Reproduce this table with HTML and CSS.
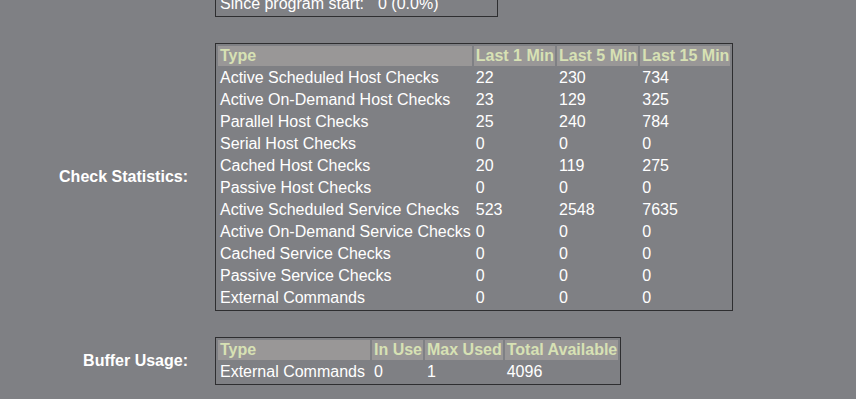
FILE: index.html
```html
<!DOCTYPE html>
<html>
<head>
<meta charset="utf-8">
<title>Performance Information</title>
<link rel="stylesheet" href="styles.css">
</head>
<body>
<div class="page">
  <div class="label"></div>
  <table class="stats">
    <tr><td class="since">Since program start:</td><td class="val">0 (0.0%)</td></tr>
  </table>

  <div class="label">Check Statistics:</div>
  <table class="stats">
    <tr><th>Type</th><th>Last 1 Min</th><th>Last 5 Min</th><th>Last 15 Min</th></tr>
    <tr><td>Active Scheduled Host Checks</td><td>22</td><td>230</td><td>734</td></tr>
    <tr><td>Active On-Demand Host Checks</td><td>23</td><td>129</td><td>325</td></tr>
    <tr><td>Parallel Host Checks</td><td>25</td><td>240</td><td>784</td></tr>
    <tr><td>Serial Host Checks</td><td>0</td><td>0</td><td>0</td></tr>
    <tr><td>Cached Host Checks</td><td>20</td><td>119</td><td>275</td></tr>
    <tr><td>Passive Host Checks</td><td>0</td><td>0</td><td>0</td></tr>
    <tr><td>Active Scheduled Service Checks</td><td>523</td><td>2548</td><td>7635</td></tr>
    <tr><td>Active On-Demand Service Checks</td><td>0</td><td>0</td><td>0</td></tr>
    <tr><td>Cached Service Checks</td><td>0</td><td>0</td><td>0</td></tr>
    <tr><td>Passive Service Checks</td><td>0</td><td>0</td><td>0</td></tr>
    <tr><td>External Commands</td><td>0</td><td>0</td><td>0</td></tr>
  </table>

  <div class="label">Buffer Usage:</div>
  <table class="stats">
    <tr><th class="buftype">Type</th><th>In Use</th><th>Max Used</th><th>Total Available</th></tr>
    <tr><td>External Commands</td><td>0</td><td>1</td><td>4096</td></tr>
  </table>
</div>
</body>
</html>
```
FILE: styles.css
```css
html, body {
  margin: 0;
  padding: 0;
  background: #7f8084;
}
body {
  font-family: "Liberation Sans", Arial, sans-serif;
  font-size: 16px;
  color: #ffffff;
}
.page {
  display: grid;
  grid-template-columns: 188px max-content;
  column-gap: 27px;
  row-gap: 26px;
  align-items: center;
  margin-top: -9px;
}
.label {
  text-align: right;
  font-weight: bold;
  color: #ffffff;
}
.stats {
  justify-self: start;
  border: 1px solid #2e2e30;
  border-collapse: separate;
  border-spacing: 2px;
}
.stats th,
.stats td {
  padding: 1px 1px 1px 2px;
  line-height: 18px;
  text-align: left;
  white-space: nowrap;
}
.stats th {
  background: #999797;
  color: #d7e1b4;
  font-weight: bold;
}
.stats td {
  color: #ffffff;
}
.stats .since {
  width: 153px;
}
.stats .val {
  width: 116px;
}
.stats .buftype {
  width: 149px;
}
```
